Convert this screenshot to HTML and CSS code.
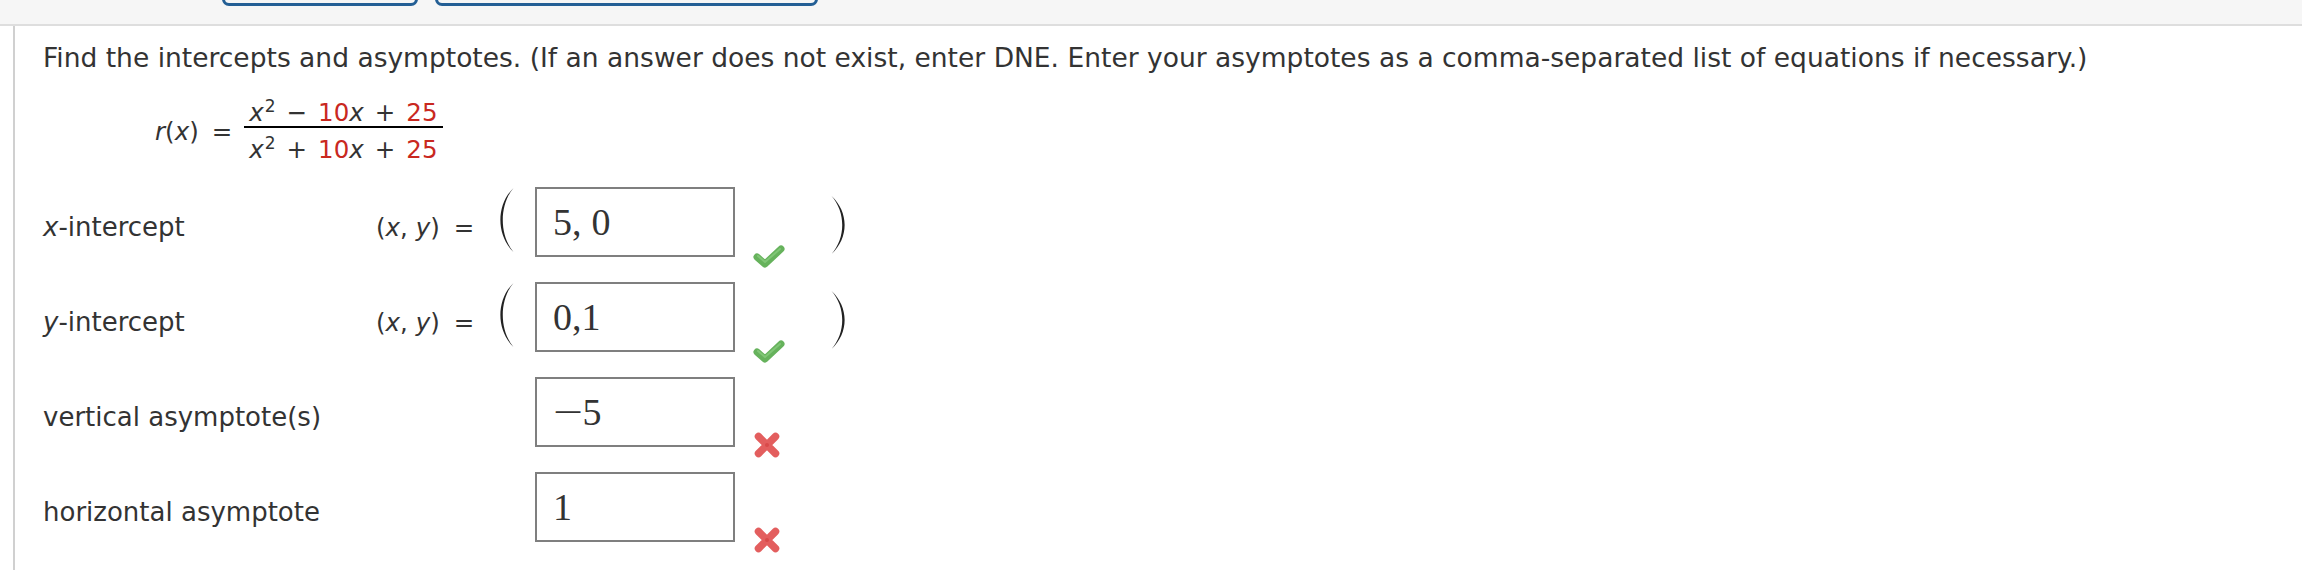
FILE: index.html
```html
<!DOCTYPE html>
<html lang="en">
<head>
<meta charset="utf-8">
<title>Intercepts and asymptotes</title>
<link rel="stylesheet" href="styles.css">
</head>
<body>
<header class="topbar">
  <span class="tab tab-a"></span>
  <span class="tab tab-b"></span>
</header>
<main class="content">
  <p class="prompt">Find the intercepts and asymptotes. (If an answer does not exist, enter DNE. Enter your asymptotes as a comma-separated list of equations if necessary.)</p>
  <div class="formula">
    <span class="lhs"><i>r</i>(<i>x</i>)</span>
    <span class="eq">=</span>
    <span class="frac">
      <span class="num"><i>x</i><sup>2</sup><span class="op">−</span><span class="red">10</span><i>x</i><span class="op">+</span><span class="red">25</span></span>
      <span class="den"><i>x</i><sup>2</sup><span class="op">+</span><span class="red">10</span><i>x</i><span class="op">+</span><span class="red">25</span></span>
    </span>
  </div>

  <div class="rows">
    <div class="row">
      <span class="label"><i>x</i>-intercept</span>
      <span class="prefix"><span class="pt">(<i>x</i>, <i>y</i>)</span><span class="peq">=</span>
        <svg class="paren open" width="17" height="66" viewBox="0 0 17 66"><path d="M15.5 1 C-2 18 -2 48 15.5 65 C1.2 48 1.2 18 15.5 1 Z" fill="#222"/></svg>
      </span>
      <span class="box">5,<span class="sp"> </span>0</span>
      <svg class="mark check" width="32" height="24" viewBox="0 0 32 24"><polyline points="4,13 12,20 28,5" fill="none" stroke="#66b25c" stroke-width="7" stroke-linecap="round" stroke-linejoin="round"/><polyline points="5,12 12,18 27,5" fill="none" stroke="#80c676" stroke-width="2" stroke-linecap="round" stroke-linejoin="round"/></svg>
      <svg class="paren close" width="17" height="60" viewBox="0 0 17 60"><path d="M1.5 1 C19 17 19 43 1.5 59 C15.8 43 15.8 17 1.5 1 Z" fill="#222"/></svg>
    </div>

    <div class="row">
      <span class="label"><i>y</i>-intercept</span>
      <span class="prefix"><span class="pt">(<i>x</i>, <i>y</i>)</span><span class="peq">=</span>
        <svg class="paren open" width="17" height="66" viewBox="0 0 17 66"><path d="M15.5 1 C-2 18 -2 48 15.5 65 C1.2 48 1.2 18 15.5 1 Z" fill="#222"/></svg>
      </span>
      <span class="box">0,1</span>
      <svg class="mark check" width="32" height="24" viewBox="0 0 32 24"><polyline points="4,13 12,20 28,5" fill="none" stroke="#66b25c" stroke-width="7" stroke-linecap="round" stroke-linejoin="round"/><polyline points="5,12 12,18 27,5" fill="none" stroke="#80c676" stroke-width="2" stroke-linecap="round" stroke-linejoin="round"/></svg>
      <svg class="paren close" width="17" height="60" viewBox="0 0 17 60"><path d="M1.5 1 C19 17 19 43 1.5 59 C15.8 43 15.8 17 1.5 1 Z" fill="#222"/></svg>
    </div>

    <div class="row">
      <span class="label">vertical asymptote(s)</span>
      <span class="prefix"></span>
      <span class="box"><span class="minus">−</span>5</span>
      <svg class="mark cross" width="28" height="28" viewBox="0 0 28 28"><path d="M5.5 5.5 L22.5 22.5 M22.5 5.5 L5.5 22.5" stroke="#e35e5e" stroke-width="7.5" stroke-linecap="round"/><circle cx="14" cy="14" r="2" fill="#d84a4a"/></svg>
    </div>

    <div class="row">
      <span class="label">horizontal asymptote</span>
      <span class="prefix"></span>
      <span class="box">1</span>
      <svg class="mark cross" width="28" height="28" viewBox="0 0 28 28"><path d="M5.5 5.5 L22.5 22.5 M22.5 5.5 L5.5 22.5" stroke="#e35e5e" stroke-width="7.5" stroke-linecap="round"/><circle cx="14" cy="14" r="2" fill="#d84a4a"/></svg>
    </div>
  </div>
</main>
</body>
</html>
```
FILE: styles.css
```css
html, body {
  margin: 0;
  padding: 0;
  background: #ffffff;
}

body {
  font-family: "DejaVu Sans", Verdana, sans-serif;
  color: #333333;
  width: 2302px;
  height: 570px;
  overflow: hidden;
}

.topbar {
  height: 24px;
  background: #f6f6f6;
  border-bottom: 2px solid #dedede;
  display: flex;
  align-items: flex-end;
  padding-left: 222px;
  gap: 17px;
  overflow: hidden;
}

.tab {
  display: block;
  height: 30px;
  margin-bottom: 18px;
  border: 3px solid #245f95;
  border-radius: 0 0 7px 7px;
  box-sizing: border-box;
  background: #f6f6f6;
}

.tab-a { width: 196px; }
.tab-b { width: 383px; }

.content {
  margin-left: 13px;
  border-left: 2px solid #d0d0d0;
  padding-left: 28px;
  padding-top: 17px;
  height: 544px;
  box-sizing: border-box;
}

.prompt {
  margin: 0;
  font-size: 26.5px;
  line-height: 30px;
  white-space: nowrap;
}

.formula {
  display: flex;
  align-items: center;
  padding-left: 112px;
  margin-top: 27px;
  font-size: 24.5px;
}

.lhs {
  line-height: 28px;
}

.eq {
  margin: 0 12px 0 13px;
  line-height: 28px;
}

.frac {
  display: inline-flex;
  flex-direction: column;
  align-items: center;
}

.num, .den {
  display: block;
  line-height: 26px;
  padding: 0 5px;
  white-space: nowrap;
}

.num {
  border-bottom: 2px solid #000;
}

.den {
  padding-top: 9px;
}

sup {
  font-size: 17px;
  line-height: 0;
  vertical-align: 9px;
  margin-left: 1px;
}

.op {
  margin: 0 11px;
}

.red {
  color: #c9281f;
}

.rows {
  margin-top: 24px;
}

.row {
  display: flex;
  align-items: flex-start;
  height: 70px;
  margin-bottom: 25px;
}

.label {
  width: 332px;
  font-size: 26px;
  line-height: 30px;
  padding-top: 25px;
  flex: none;
}

.prefix {
  width: 160px;
  flex: none;
  display: flex;
  align-items: flex-start;
  font-size: 24.5px;
}

.pt {
  white-space: nowrap;
  margin-left: 1px;
  line-height: 30px;
  padding-top: 26px;
}

.peq {
  margin-left: 14px;
  line-height: 30px;
  padding-top: 26px;
}

.paren {
  display: block;
  flex: none;
}

.paren.open {
  margin-left: 24px;
}

.box {
  width: 200px;
  height: 70px;
  box-sizing: border-box;
  border: 2px solid #7f7f7f;
  padding: 13px 0 0 16px;
  font-family: "Liberation Serif", "Times New Roman", serif;
  font-size: 38px;
  line-height: 40px;
  color: #333333;
  flex: none;
}

.sp {
  display: inline-block;
  width: 10px;
}

.minus {
  display: inline-block;
  transform: scaleX(1.4);
  transform-origin: left center;
  margin-right: 8px;
}

.mark {
  display: block;
  flex: none;
  margin-left: 18px;
  align-self: flex-end;
}

.check {
  margin-bottom: -11px;
}

.cross {
  margin-bottom: -12px;
}

.paren.close {
  margin-left: 45px;
  margin-top: 8px;
}
```
